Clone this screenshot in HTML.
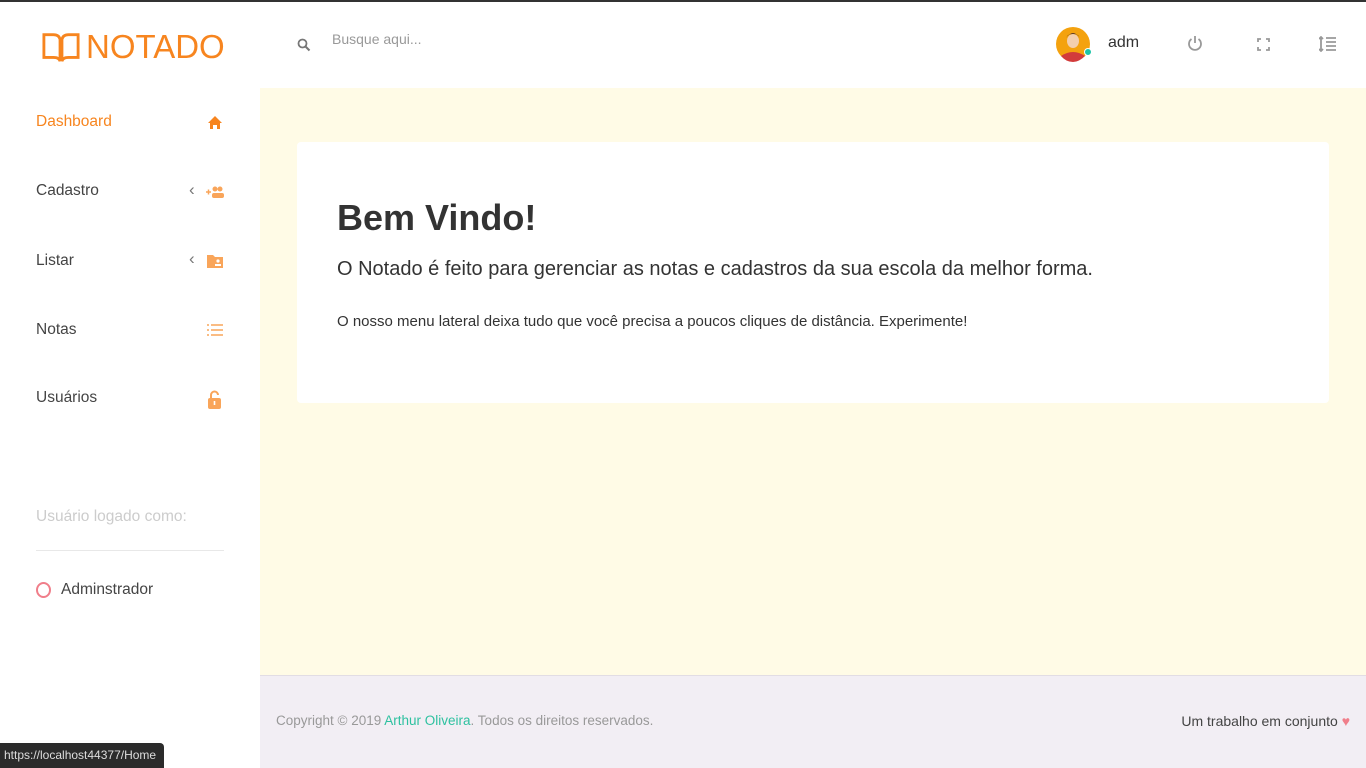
<!DOCTYPE html>
<html><head><meta charset="utf-8"><style>
*{margin:0;padding:0;box-sizing:border-box}
body{width:1366px;height:768px;overflow:hidden;font-family:"Liberation Sans",sans-serif;background:#fff;position:relative;color:#333}
.topline{position:absolute;left:0;top:0;width:1366px;height:2px;background:#333}
.logo{position:absolute;left:42px;top:28px;display:flex;align-items:center;color:#f7851f;font-size:33px;letter-spacing:0px}
.search{position:absolute;left:297px;top:33px;color:#888;font-size:14px}
.search span{position:absolute;left:35px;top:-2px;width:120px;color:#999}
.item{position:absolute;left:36px;font-size:15.5px;color:#444}
.ic{position:absolute;left:206px}
.main{position:absolute;left:260px;top:88px;width:1106px;height:587px;background:#fffbe6}
.card{position:absolute;left:297px;top:142px;width:1032px;height:261px;background:#fff;border-radius:4px}
.footer{position:absolute;left:260px;top:675px;width:1106px;height:93px;background:#f2eef4;border-top:1px solid #e2dde4}
</style></head><body>
<div class="topline"></div>
<div class="logo"><svg width="38" height="34" viewBox="0 0 40 34"><path d="M2 4 H12 Q18 4 19 9 V32 Q18 28 12 28 H2 Z M38 4 H28 Q22 4 21 9 V32 Q22 28 28 28 H38 Z" fill="none" stroke="#f7851f" stroke-width="3"/></svg><span style="margin-left:6px">NOTADO</span></div>
<div class="search"><svg width="14" height="14" viewBox="0 0 14 14" style="position:absolute;top:5px"><circle cx="5.5" cy="5.5" r="4" fill="none" stroke="#777" stroke-width="1.8"/><path d="M8.5 8.5 L12.5 12.5" stroke="#777" stroke-width="2"/></svg><span>Busque aqui...</span></div>
<svg style="position:absolute;left:1056px;top:24px" width="40" height="42" viewBox="0 0 40 42"><circle cx="17" cy="20" r="17" fill="#f4a20e"/><path d="M5 32 Q17 24 29 32 Q23 38 17 38 Q10 38 5 32Z" fill="#d23b3b"/><ellipse cx="17" cy="17" rx="6" ry="7" fill="#f3cfae"/><path d="M10 14 Q17 4 24 14 L22 11 Q17 9 12 11Z" fill="#5a3622"/><circle cx="32" cy="28" r="3.5" fill="#1cc5a8" stroke="#fff" stroke-width="1"/></svg>
<div style="position:absolute;left:1108px;top:34px;font-size:16px;color:#333">adm</div>
<svg style="position:absolute;left:1187px;top:35px" width="16" height="17" viewBox="0 0 16 17"><path d="M4.5 4 A6 6 0 1 0 11.5 4" fill="none" stroke="#999" stroke-width="1.8"/><path d="M8 1 V8" stroke="#999" stroke-width="1.8"/></svg>
<svg style="position:absolute;left:1257px;top:38px" width="13" height="13" viewBox="0 0 13 13" fill="none" stroke="#999" stroke-width="1.8"><path d="M1 4V1H4M9 1H12V4M12 9V12H9M4 12H1V9"/></svg>
<svg style="position:absolute;left:1319px;top:36px" width="18" height="16" viewBox="0 0 18 16" stroke="#999" stroke-width="1.8"><path d="M2 1V15M0 3L2 1L4 3M0 13L2 15L4 13M7 2H17M7 6H17M7 10H17M7 14H17"/></svg>

<div class="item" style="top:113px;color:#f7851f">Dashboard</div>
<svg class="ic" style="top:115px;left:207px" width="16" height="15" viewBox="0 0 16 15"><path d="M8 1 L15 8 H13 V14 H10 V10 H6 V14 H3 V8 H1Z" fill="#f7851f"/></svg>
<div class="item" style="top:182px">Cadastro</div>
<div style="position:absolute;left:189px;top:180px;color:#777;font-size:17px">‹</div>
<svg style="position:absolute;left:205px;top:185px" width="20" height="14" viewBox="0 0 20 14" fill="#f9a55a"><path d="M1 7H6M3.5 4.5V9.5" stroke="#f9a55a" stroke-width="1.5"/><circle cx="10" cy="4" r="2.5"/><circle cx="15" cy="4" r="2.5"/><rect x="7" y="8" width="12" height="5" rx="2"/></svg>
<div class="item" style="top:252px">Listar</div>
<div style="position:absolute;left:189px;top:249px;color:#777;font-size:17px">‹</div>
<svg style="position:absolute;left:207px;top:254px" width="17" height="15" viewBox="0 0 17 15"><path d="M0 1H6L8 3H16V14H0Z" fill="#f9a55a"/><circle cx="11" cy="7" r="1.6" fill="#fff"/><rect x="8" y="10" width="6" height="2" fill="#fff"/></svg>
<div class="item" style="top:321px">Notas</div>
<svg style="position:absolute;left:207px;top:323px" width="16" height="14" viewBox="0 0 16 14" stroke="#f9a55a" stroke-width="1.5"><path d="M0 2H2M4 2H16M0 7H2M4 7H16M0 12H2M4 12H16"/></svg>
<div class="item" style="top:389px">Usuários</div>
<svg style="position:absolute;left:207px;top:390px" width="15" height="20" viewBox="0 0 15 20"><path d="M4 8V5A3.5 3.5 0 0 1 11 5" fill="none" stroke="#f9a55a" stroke-width="2"/><rect x="1" y="8" width="13" height="11" rx="2" fill="#f9a55a"/><path d="M7.5 11V15" stroke="#fff" stroke-width="1.6"/></svg>
<div class="item" style="top:508px;color:#ccc">Usuário logado como:</div>
<div style="position:absolute;left:36px;top:550px;width:188px;height:1px;background:#e8e8e8"></div>
<div style="position:absolute;left:36px;top:582px;width:15px;height:16px;border:2px solid #f07e8a;border-radius:50%"></div>
<div class="item" style="top:581px;left:61px">Adminstrador</div>

<div class="main"></div>
<div class="card">
<div style="position:absolute;left:40px;top:55px;font-size:36px;font-weight:bold;color:#333">Bem Vindo!</div>
<div style="position:absolute;left:40px;top:116px;font-size:20px;color:#333">O Notado é feito para gerenciar as notas e cadastros da sua escola da melhor forma.</div>
<div style="position:absolute;left:40px;top:171px;font-size:15px;color:#333">O nosso menu lateral deixa tudo que você precisa a poucos cliques de distância. Experimente!</div>
</div>
<div class="footer">
<div style="position:absolute;left:16px;top:37px;font-size:13.5px;color:#999">Copyright © 2019 <span style="color:#2ec1a0">Arthur Oliveira</span>. Todos os direitos reservados.</div>
<div style="position:absolute;right:16px;top:37px;font-size:14px;color:#444">Um trabalho em conjunto <span style="color:#f07e8a">♥</span></div>
</div>
<div style="position:absolute;left:0;top:743px;width:164px;height:25px;background:#2b2b2b;border-radius:0 4px 0 0;color:#ddd;font-size:12px;padding:5px 0 0 4px;white-space:nowrap;overflow:hidden">https://localhost44377/Home</div>
</body></html>
